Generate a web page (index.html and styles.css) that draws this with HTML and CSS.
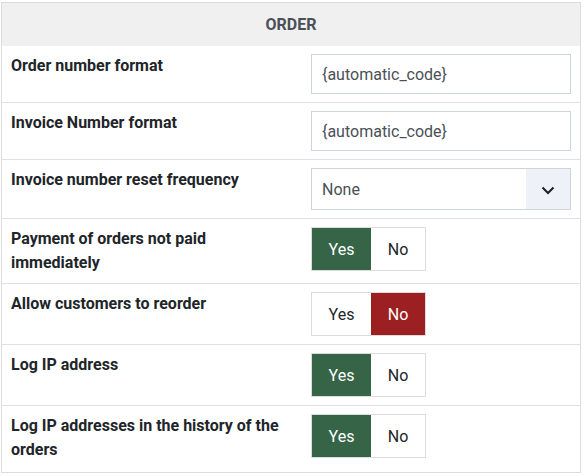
FILE: index.html
```html
<!DOCTYPE html>
<html>
<head>
<meta charset="utf-8">
<link rel="stylesheet" href="styles.css">
</head>
<body>
<div class="panel">
  <div class="panel-head">ORDER</div>
  <div class="row">
    <div class="label">Order number format</div>
    <div class="control"><div class="input">{automatic_code}</div></div>
  </div>
  <div class="row">
    <div class="label">Invoice Number format</div>
    <div class="control"><div class="input">{automatic_code}</div></div>
  </div>
  <div class="row">
    <div class="label">Invoice number reset frequency</div>
    <div class="control">
      <div class="select">
        <span class="select-value">None</span>
        <span class="select-btn"><svg width="14" height="9" viewBox="0 0 14 9"><polyline points="1.5,1.5 7,7 12.5,1.5" fill="none" stroke="#1d2125" stroke-width="2"/></svg></span>
      </div>
    </div>
  </div>
  <div class="row">
    <div class="label">Payment of orders not paid immediately</div>
    <div class="control"><div class="toggle"><span class="opt yes on">Yes</span><span class="opt no">No</span></div></div>
  </div>
  <div class="row">
    <div class="label">Allow customers to reorder</div>
    <div class="control"><div class="toggle"><span class="opt yes">Yes</span><span class="opt no off">No</span></div></div>
  </div>
  <div class="row">
    <div class="label">Log IP address</div>
    <div class="control"><div class="toggle"><span class="opt yes on">Yes</span><span class="opt no">No</span></div></div>
  </div>
  <div class="row last">
    <div class="label">Log IP addresses in the history of the orders</div>
    <div class="control"><div class="toggle"><span class="opt yes on">Yes</span><span class="opt no">No</span></div></div>
  </div>
</div>
</body>
</html>
```
FILE: styles.css
```css
* { box-sizing: border-box; }
html, body { margin: 0; background: #fff; }
body { font-family: Roboto, "Liberation Sans", sans-serif; color: #212529; }
.panel {
  width: 580px;
  margin: 2px 0 0 1px;
  border: 1px solid #dcdcdc;
}
.panel-head {
  height: 43px;
  background: #f0f0f0;
  color: #495057;
  font-weight: 700;
  font-size: 16px;
  display: flex;
  align-items: center;
  justify-content: center;
}
.row {
  display: grid;
  grid-template-columns: 300px 1fr;
  border-top: 1px solid #dee2e6;
}
.panel-head + .row { border-top: none; }
.label {
  padding: 8px 9px;
  font-weight: 700;
  font-size: 16px;
  line-height: 24px;
  color: #212529;
}
.control { padding: 8px 9px; }
.input {
  width: 260px;
  height: 40px;
  border: 1px solid #ced4da;
  padding: 0 10px;
  display: flex;
  align-items: center;
  font-size: 16px;
  color: #495057;
}
.select {
  width: 260px;
  height: 42px;
  border: 1px solid #ced4da;
  display: flex;
  align-items: stretch;
  font-size: 16px;
  color: #495057;
}
.select-value { flex: 1; display: flex; align-items: center; padding: 0 10px; }
.select-btn {
  width: 44px;
  background: #eef2f8;
  display: flex;
  align-items: center;
  justify-content: center;
  padding-top: 2px;
}
.toggle {
  display: inline-flex;
  height: 44px;
  border: 1px solid #dcdcdc;
  font-size: 16px;
}
.opt { display: flex; align-items: center; justify-content: center; color: #212529; }
.opt.yes { width: 59px; }
.opt.no { width: 54px; }
.opt.on { background: #366446; color: #fff; }
.opt.off { background: #9c1f21; color: #fff; }
.row.last .control, .row.last .label { padding-bottom: 10px; }
```
